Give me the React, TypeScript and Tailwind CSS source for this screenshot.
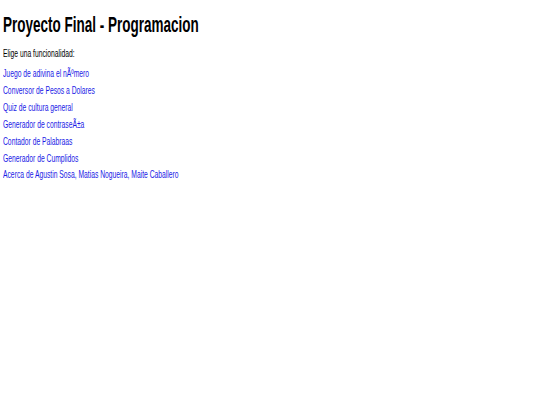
const links = [
  'Juego de adivina el nÃºmero',
  'Conversor de Pesos a Dolares',
  'Quiz de cultura general',
  'Generador de contraseÃ±a',
  'Contador de Palabraas',
  'Generador de Cumplidos',
  'Acerca de Agustin Sosa, Matias Nogueira, Maite Caballero',
];

export default function App() {
  return (
    <div className="min-h-[405px] w-[540px] bg-white pl-[3.4px] pt-[12px] font-['Liberation_Sans',Arial,sans-serif] text-black">
      <h1 className="origin-left scale-x-[0.625] whitespace-nowrap text-[21.6px] font-bold leading-[25px]">
        Proyecto Final - Programacion
      </h1>
      <p className="mt-[7.8px] origin-left scale-x-[0.625] whitespace-nowrap text-[10.8px] leading-[17px]">
        Elige una funcionalidad:
      </p>
      <nav className="mt-[3.2px] flex flex-col">
        {links.map((l) => (
          <a
            key={l}
            href="#"
            className="block origin-left scale-x-[0.625] whitespace-nowrap text-[10.8px] leading-[16.9px] text-[#1a1ae6] no-underline"
          >
            {l}
          </a>
        ))}
      </nav>
    </div>
  );
}
